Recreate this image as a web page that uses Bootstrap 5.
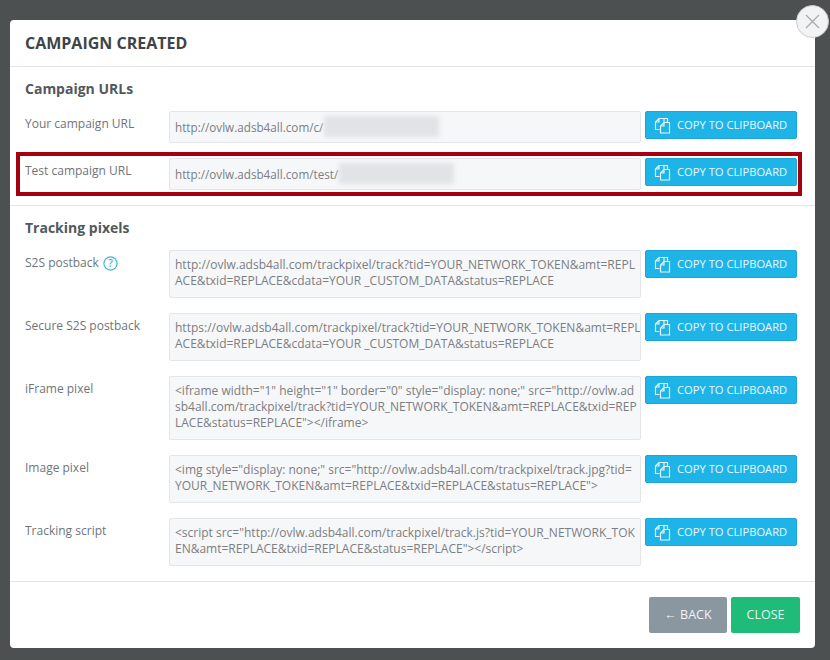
<!DOCTYPE html>
<html lang="en">
<head>
<meta charset="utf-8">
<title>Campaign created</title>
<link rel="stylesheet" href="https://cdn.jsdelivr.net/npm/bootstrap@5.3.0/dist/css/bootstrap.min.css">
<style>
html,body{height:660px;overflow:hidden}
body{background:#4c5051;font-family:"Open Sans",sans-serif;font-size:12px;color:#666;padding:20px 15px 0 10px}
.dlg{position:relative;height:628px;background:#fff;border-radius:4px;display:flex;flex-direction:column}
.dlg-head{height:47px;border-bottom:1px solid #e4e6e8;padding:1px 15px 0;display:flex;align-items:center}
.dlg-head h1{font-size:16px;font-weight:700;color:#3f4447;margin:0}
.dlg-body{flex:1;padding:0 18px 0 15px}
.sect-title{font-size:14px;font-weight:700;color:#53585c;line-height:20px;margin:0}
.sect-a{padding-top:12px;margin-bottom:12px}
.sect-b{margin-top:12px;margin-bottom:12px}
.line-row{display:flex;margin-bottom:15px;position:relative}
.line-label{width:144px;flex:none;line-height:17px;padding-top:4px;color:#707478}
.fake-field{width:472px;flex:none;margin-right:4px;padding:6px 5px 8px;background:#f6f7f9;border:1px solid #e3e5e8;border-radius:2px;color:#7b7e82;font-size:12px;line-height:16px;white-space:nowrap;overflow:hidden}
.fake-field.one{padding:7px 5px 8px;height:32px;font-size:11.7px;line-height:16px;display:flex;align-items:center}
.masked{display:inline-block;width:115px;height:21px;background:#e2e3e5;filter:blur(2px);margin-left:1px}
.copy-btn{flex:none;width:152px;height:28px;background:#1fb4e8;border:1px solid #1ea5d6;border-radius:2px;color:#e8f8fe;font-size:11.2px;line-height:14px;padding:0 0 0 8px;display:flex;align-items:center;gap:6px;white-space:nowrap}
.copy-btn:hover{background:#1fb4e8;color:#e8f8fe;border-color:#1ea5d6}
.red-frame{position:absolute;left:-9px;top:-6px;width:786px;height:44px;border:4px solid #a50010;pointer-events:none}
.split{border-top:1px solid #e4e6e8;margin:0 -18px 0 -15px}
.help-ic{display:inline-block;vertical-align:-4px;margin-left:1px}
.dlg-foot{height:67px;border-top:1px solid #e4e6e8;padding:15px 15px 0 0;display:flex;justify-content:flex-end;gap:4px}
.foot-btn{height:36px;border-radius:2px;font-size:12.5px;color:#fff;display:flex;align-items:center;justify-content:center;padding:0;border:0}
.foot-back{width:78px;background:#8a96a0;color:#f2f4f5}
.foot-close{width:69px;background:#1fbb78;color:#e6f7ef}
.x-btn{position:absolute;left:786px;top:-15px;width:33px;height:33px;border-radius:50%;background:#f2f3f4;border:1px solid #c9cccf;padding:0;display:flex;align-items:center;justify-content:center}
</style>
</head>
<body>
<svg width="0" height="0" class="d-none"><symbol id="dup" viewBox="0 0 17 17"><path d="M5.5 12.5H1.5V5L5 1.5H10V5.5M5 1.5V5H1.5M6.5 16V9L10 5.5H15.5V16ZM10 5.5V9H6.5M10 1.5H13.5V5.5" fill="none" stroke="currentColor" stroke-width="1.15"/></symbol></svg>
<div class="dlg">
  <button class="x-btn" type="button" aria-label="Close"><svg width="15" height="15" viewBox="0 0 15 15"><path d="M1 1L14 14M14 1L1 14" stroke="#a9adb0" stroke-width="1.4"/></svg></button>
  <div class="dlg-head"><h1>CAMPAIGN CREATED</h1></div>
  <div class="dlg-body">
    <h2 class="sect-title sect-a">Campaign URLs</h2>
    <div class="line-row">
      <div class="line-label">Your campaign URL</div>
      <div class="fake-field one">http://ovlw.adsb4all.com/c/<span class="masked"></span></div>
      <button class="btn copy-btn" type="button"><svg width="17" height="17"><use href="#dup"/></svg>COPY TO CLIPBOARD</button>
    </div>
    <div class="line-row">
      <div class="red-frame"></div>
      <div class="line-label">Test campaign URL</div>
      <div class="fake-field one">http://ovlw.adsb4all.com/test/<span class="masked"></span></div>
      <button class="btn copy-btn" type="button"><svg width="17" height="17"><use href="#dup"/></svg>COPY TO CLIPBOARD</button>
    </div>
    <div class="split"></div>
    <h2 class="sect-title sect-b">Tracking pixels</h2>
    <div class="line-row">
      <div class="line-label">S2S postback <svg class="help-ic" width="15" height="15" viewBox="0 0 15 15"><circle cx="7.5" cy="7.5" r="6.6" fill="none" stroke="#45b3cf" stroke-width="1.2"/><text x="7.5" y="11" text-anchor="middle" font-size="10" font-weight="600" font-family="Open Sans" fill="#45b3cf">?</text></svg></div>
      <div class="fake-field">http://ovlw.adsb4all.com/trackpixel/track?tid=YOUR_NETWORK_TOKEN&amp;amt=REPL<br>ACE&amp;txid=REPLACE&amp;cdata=YOUR _CUSTOM_DATA&amp;status=REPLACE</div>
      <button class="btn copy-btn" type="button"><svg width="17" height="17"><use href="#dup"/></svg>COPY TO CLIPBOARD</button>
    </div>
    <div class="line-row">
      <div class="line-label">Secure S2S postback</div>
      <div class="fake-field">https://ovlw.adsb4all.com/trackpixel/track?tid=YOUR_NETWORK_TOKEN&amp;amt=REPL<br>ACE&amp;txid=REPLACE&amp;cdata=YOUR _CUSTOM_DATA&amp;status=REPLACE</div>
      <button class="btn copy-btn" type="button"><svg width="17" height="17"><use href="#dup"/></svg>COPY TO CLIPBOARD</button>
    </div>
    <div class="line-row">
      <div class="line-label">iFrame pixel</div>
      <div class="fake-field">&lt;iframe width="1" height="1" border="0" style="display: none;" src="http://ovlw.ad<br>sb4all.com/trackpixel/track?tid=YOUR_NETWORK_TOKEN&amp;amt=REPLACE&amp;txid=REP<br>LACE&amp;status=REPLACE"&gt;&lt;/iframe&gt;</div>
      <button class="btn copy-btn" type="button"><svg width="17" height="17"><use href="#dup"/></svg>COPY TO CLIPBOARD</button>
    </div>
    <div class="line-row">
      <div class="line-label">Image pixel</div>
      <div class="fake-field">&lt;img style="display: none;" src="http://ovlw.adsb4all.com/trackpixel/track.jpg?tid=<br>YOUR_NETWORK_TOKEN&amp;amt=REPLACE&amp;txid=REPLACE&amp;status=REPLACE"&gt;</div>
      <button class="btn copy-btn" type="button"><svg width="17" height="17"><use href="#dup"/></svg>COPY TO CLIPBOARD</button>
    </div>
    <div class="line-row">
      <div class="line-label">Tracking script</div>
      <div class="fake-field">&lt;script src="http://ovlw.adsb4all.com/trackpixel/track.js?tid=YOUR_NETWORK_TOK<br>EN&amp;amt=REPLACE&amp;txid=REPLACE&amp;status=REPLACE"&gt;&lt;/script&gt;</div>
      <button class="btn copy-btn" type="button"><svg width="17" height="17"><use href="#dup"/></svg>COPY TO CLIPBOARD</button>
    </div>
  </div>
  <div class="dlg-foot">
    <button class="btn foot-btn foot-back" type="button">← BACK</button>
    <button class="btn foot-btn foot-close" type="button">CLOSE</button>
  </div>
</div>
<script src="https://cdn.jsdelivr.net/npm/bootstrap@5.3.0/dist/js/bootstrap.bundle.min.js"></script>
</body>
</html>
